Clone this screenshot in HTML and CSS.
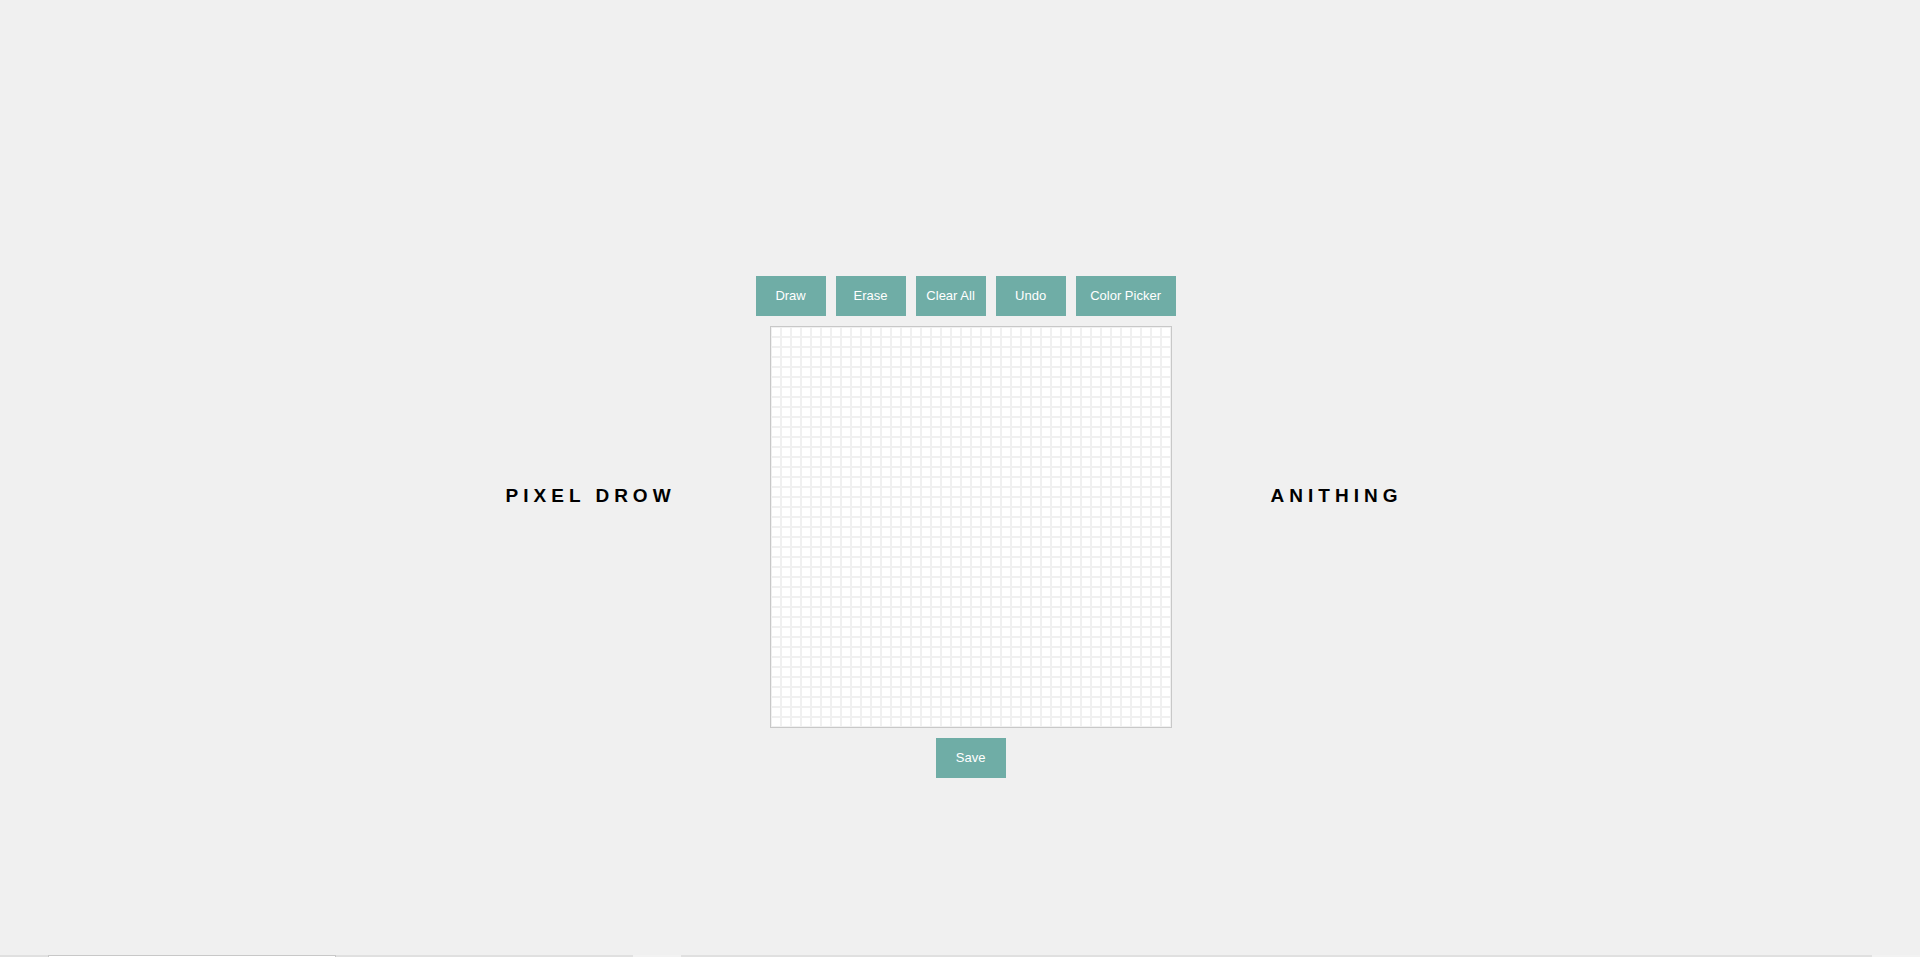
FILE: index.html
```html
<!DOCTYPE html>
<html lang="en">
<head>
<meta charset="utf-8">
<title>Pixel Drow Anithing</title>
<link rel="stylesheet" href="styles.css">
</head>
<body>
<main class="stage">
  <h1 class="title title-left">PIXEL DROW</h1>
  <section class="editor">
    <div class="tools">
      <button class="btn" type="button">Draw</button>
      <button class="btn" type="button">Erase</button>
      <button class="btn" type="button">Clear All</button>
      <button class="btn" type="button">Undo</button>
      <button class="btn btn-wide" type="button">Color Picker</button>
    </div>
    <div class="grid"></div>
    <button class="btn" type="button">Save</button>
  </section>
  <h1 class="title title-right">ANITHING</h1>
</main>
<footer class="bar">
  <div class="seg seg-start"></div>
  <div class="seg seg-field"></div>
  <div class="seg seg-middle"></div>
  <div class="seg seg-active"></div>
  <div class="seg seg-rest"></div>
  <div class="seg seg-active"></div>
</footer>
</body>
</html>
```
FILE: styles.css
```css
* {
  box-sizing: border-box;
}

body {
  display: flex;
  flex-direction: column;
  min-height: 100vh;
  margin: 0;
  background: #f0f0f0;
  font-family: Arial, "Liberation Sans", sans-serif;
}

.stage {
  flex: 1;
  display: flex;
  justify-content: center;
  align-items: center;
  padding: 99px 12px 0 0;
}

.title {
  margin: 0 0 62px;
  color: #000;
  font-size: 19px;
  line-height: 24px;
  letter-spacing: 5px;
  white-space: nowrap;
}

.title-left {
  margin-right: 80px;
}

.title-right {
  margin-left: 85px;
}

.editor {
  display: flex;
  flex-direction: column;
  align-items: center;
  gap: 10px;
}

.tools {
  display: flex;
  gap: 10px;
  padding-right: 10px;
}

.btn {
  width: 70px;
  height: 40px;
  padding: 0 0 2px;
  border: 0;
  background: #6fada6;
  color: #fff;
  font-family: inherit;
  font-size: 13px;
  cursor: pointer;
}

.btn-wide {
  width: 100px;
}

.grid {
  width: 402px;
  height: 402px;
  border: 1px solid #c8c8c8;
  background:
    linear-gradient(90deg, #f0f0f0 1px, transparent 1px 9px, #f0f0f0 9px) 0 0 / 10px 10px,
    linear-gradient(#f0f0f0 1px, #fff 1px 9px, #f0f0f0 9px) 0 0 / 10px 10px;
}

.bar {
  display: flex;
  height: 2px;
}

.seg {
  flex: 48 1 0;
  background: #e0e0e0;
}

.seg-field {
  flex-grow: 286;
  border: 1px solid #c8c8c8;
  border-bottom: 0;
  background: #fff;
}

.seg-middle {
  flex-grow: 297;
}

.seg-active {
  background: #f2f2f2;
}

.seg-rest {
  flex-grow: 1191;
}
```
